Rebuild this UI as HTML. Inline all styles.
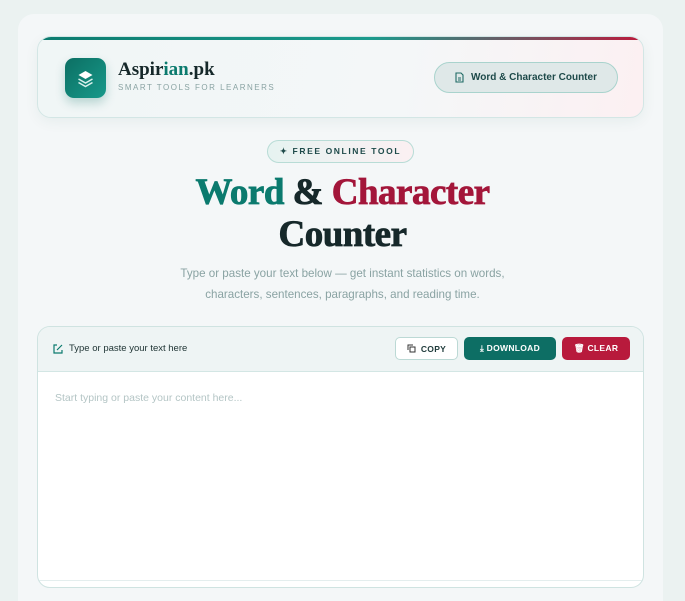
<!DOCTYPE html>
<html style="width:685px;height:601px;overflow:hidden"><head><meta charset="utf-8"><style>
*{box-sizing:border-box;margin:0;padding:0}
body{width:685px;height:601px;overflow:hidden;background:#ebf2f1;font-family:"Liberation Sans",sans-serif;position:relative}
.panel{position:absolute;left:18px;top:14px;width:645px;height:587px;background:#f4f7f8;border-radius:16px 16px 0 0}
.hdr{position:absolute;left:37px;top:36px;width:607px;height:82px;border-radius:14px;border:1px solid #d3e6e5;background:linear-gradient(100deg,#f0f6f6,#f4f7f8 60%,#fcf0f2);overflow:hidden;box-shadow:0 4px 14px rgba(0,80,70,.06)}
.hdr:before{content:"";position:absolute;left:0;top:0;right:0;height:3px;background:linear-gradient(90deg,#0b7a6e,#1a9a8c 55%,#bb1a3c)}
.logo{position:absolute;left:27px;top:21px;width:41px;height:40px;border-radius:9px;background:linear-gradient(135deg,#0c6f63,#17998a);box-shadow:0 5px 10px rgba(10,110,100,.25)}
.brand{position:absolute;left:80px;top:22px;font-family:"Liberation Serif",serif;font-weight:bold;font-size:19px;color:#16282a}
.brand span{color:#0b7a6e}
.tag{position:absolute;left:80px;top:46px;font-size:8px;letter-spacing:1.5px;color:#8aa3a3}
.pill{position:absolute;left:396px;top:25px;width:184px;height:31px;border-radius:16px;border:1px solid #a9d3cd;background:#dfe8e8;font-size:10px;font-weight:bold;color:#1e4a4a;display:flex;align-items:center;justify-content:center;gap:7px}
.badge{position:absolute;left:267px;top:140px;width:147px;height:23px;border-radius:12px;border:1px solid #b8dcd6;background:linear-gradient(90deg,#e6f3f1,#fbf0f2);font-size:8.5px;font-weight:bold;letter-spacing:1.6px;color:#1e4a4a;display:flex;align-items:center;justify-content:center}
h1{position:absolute;left:0;width:685px;top:172px;text-align:center;font-family:"Liberation Serif",serif;font-weight:bold;font-size:37px;line-height:42px;color:#16282a;letter-spacing:-.5px;-webkit-text-stroke:.8px currentColor}
.t{color:#0b7a6e}.r{color:#a3163a}
.sub{position:absolute;left:0;width:685px;top:263px;text-align:center;font-size:11.6px;line-height:21px;color:#8aa3a3}
.ed{position:absolute;left:37px;top:326px;width:607px;height:262px;border:1px solid #cfe3e1;border-radius:13px;background:#fff;overflow:hidden}
.tb{height:45px;background:#eef4f4;border-bottom:1px solid #d3e6e4;position:relative}
.lbl{position:absolute;left:15px;top:16px;font-size:9.5px;color:#1e3333;display:flex;gap:6px;align-items:center}
.btn{position:absolute;top:10px;height:23px;border-radius:5px;font-size:8.5px;font-weight:bold;display:flex;align-items:center;justify-content:center;gap:5px;letter-spacing:.3px}
.ph{position:absolute;left:17px;top:65px;font-size:10.5px;color:#b4c5c5}
.ft{position:absolute;left:0;right:0;bottom:0;height:7px;border-top:1px solid #e4eeee}
</style></head><body>
<div class="panel"></div>
<div class="hdr">
<div class="logo"><svg width="41" height="40" viewBox="0 0 41 40"><path d="M20.5 13l7 4-7 4-7-4z" fill="#fff"/><path d="M13.5 21l7 4 7-4M13.5 24.5l7 4 7-4" fill="none" stroke="#d8f0ec" stroke-width="1.5"/></svg></div>
<div class="brand">Aspir<span>ian</span>.pk</div>
<div class="tag">SMART TOOLS FOR LEARNERS</div>
<div class="pill"><svg width="9" height="11" viewBox="0 0 9 11"><path d="M1 1h5l2 2v7H1z M3 6h3M3 8h3" fill="none" stroke="#1e6a64" stroke-width="1.1"/></svg>Word &amp; Character Counter</div>
</div>
<div class="badge">✦ FREE ONLINE TOOL</div>
<h1><span class="t">Word</span> &amp; <span class="r">Character</span><br>Counter</h1>
<div class="sub">Type or paste your text below — get instant statistics on words,<br>characters, sentences, paragraphs, and reading time.</div>
<div class="ed">
<div class="tb">
<div class="lbl"><svg width="10" height="10" viewBox="0 0 10 10"><path d="M4 1H1v8h8V6M4 6l5-5" fill="none" stroke="#0b7a6e" stroke-width="1.2"/></svg>Type or paste your text here</div>
<div class="btn" style="left:357px;width:63px;background:#fff;border:1px solid #bcd9d5;color:#1e3a3a"><svg width="9" height="9" viewBox="0 0 9 9"><path d="M1 6V1h5M3 3h5v5H3z" fill="none" stroke="#333" stroke-width="1"/></svg>COPY</div>
<div class="btn" style="left:426px;width:92px;background:#0d6e64;color:#fff">⤓ DOWNLOAD</div>
<div class="btn" style="left:524px;width:68px;background:#b81a3c;color:#fff">🗑 CLEAR</div>
</div>
<div class="ph">Start typing or paste your content here...</div>
<div class="ft"></div>
</div>
</body></html>
